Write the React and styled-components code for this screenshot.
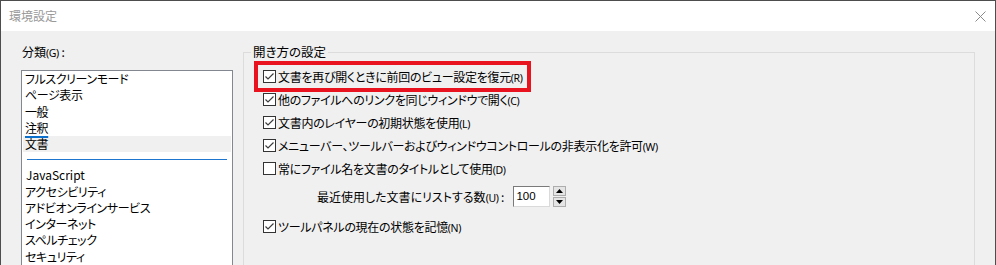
import React from "react";
import styled, { createGlobalStyle } from "styled-components";

const GlobalStyle = createGlobalStyle`
    body {
        margin: 0;
        background: #3a3a3a;
        font-family: "Noto Sans CJK JP", "Noto Sans", sans-serif;
        font-feature-settings: "palt" 1;
        color: #000;
    }
`

const Window = styled.div`
    width: 994px;
    height: 264px;
    border: 1px solid #4d4d4d;
    border-bottom: none;
    background: #f0f0f0;
    overflow: hidden;
    display: flex;
    flex-direction: column;
`

const TitleBar = styled.div`
    height: 30px;
    background: #fff;
    display: flex;
    align-items: center;
    justify-content: space-between;
    padding: 0 9px 0 8px;
    flex-shrink: 0;
`

const Title = styled.span`
    font-size: 12px;
    color: #999;
    line-height: 16px;
`

const CloseButton = styled.button`
    width: 12px;
    height: 12px;
    padding: 0;
    border: none;
    background: none;
    display: flex;
    align-items: center;
    justify-content: center;
`

const Body = styled.div`
    display: flex;
    gap: 10px;
    padding: 13px 20px 0 20px;
`

const LeftColumn = styled.div`
    width: 212px;
    flex-shrink: 0;
    display: flex;
    flex-direction: column;
`

const Label = styled.div`
    font-size: 12px;
    line-height: 16px;
    margin: 0 0 9px 1px;
`

const Key = styled.span`
    font-family: "Noto Sans", sans-serif;
    font-size: 10.5px;
    letter-spacing: -0.4px;
`

const ListBox = styled.div`
    height: 260px;
    border: 1px solid #828790;
    background: #fff;
    padding: 0 1px;
`

const Item = styled.div`
    height: 16.25px;
    line-height: 16.25px;
    font-size: 12px;
    letter-spacing: ${p => p.$latin ? 0 : -0.4}px;
    padding-left: ${p => p.$latin ? 3 : 2}px;
    background: ${p => p.$selected ? '#f0f0f0' : 'transparent'};
    white-space: nowrap;
`

const Hovered = styled.span`
    text-decoration: underline;
    text-decoration-color: #0b6fcc;
    text-decoration-thickness: 2px;
    text-underline-offset: 3px;
`

const Separator = styled.div`
    height: 1px;
    background: #1f76cf;
    margin: 7px 4px 7px 4px;
`

const Group = styled.fieldset`
    flex: 1;
    margin: 0;
    padding: 0;
    border: 1px solid #dcdcdc;
    min-width: 0;
    height: 260px;
`

const Legend = styled.legend`
    margin-left: 7px;
    padding: 0 2px;
    font-size: 12.5px;
    line-height: 16px;
`

const Options = styled.div`
    padding: 5px 0 0 19px;
    display: flex;
    flex-direction: column;
    align-items: flex-start;
`

const Row = styled.label`
    display: flex;
    align-items: center;
    gap: 2px;
    height: 23px;
    font-size: 12px;
    letter-spacing: -0.3px;
    white-space: nowrap;
    ${p => p.$highlight && `
        margin-left: -5px;
        padding: 0 5px 0 5px;
        outline: 4px solid #e8131e;
    `}
`

const SpinRow = styled.div`
    display: flex;
    align-items: center;
    margin: 6px 0 8px 54px;
    font-size: 12px;
    white-space: nowrap;
`

const SpinLabel = styled.span`
    margin-right: 9px;
`

const SpinInput = styled.div`
    width: 33px;
    height: 19px;
    padding-left: 2px;
    background: #fff;
    border: 1px solid;
    border-color: #7a7a7a #dadada #dadada #7a7a7a;
    font-family: "Liberation Sans", sans-serif;
    font-size: 11.5px;
    line-height: 19px;
`

const SpinButtons = styled.div`
    display: flex;
    flex-direction: column;
    gap: 1px;
    margin-left: 3px;
`

const SpinButton = styled.div`
    width: 11px;
    height: 8px;
    border: 1px solid #adadad;
    background: #e5e5e5;
    display: flex;
    align-items: center;
    justify-content: center;
`

const CheckBox = ({ checked }) => (
    <svg width="13" height="13" viewBox="0 0 13 13">
        <rect x="0.5" y="0.5" width="12" height="12" fill="#fff" stroke="#333" />
        {checked && <polyline points="2.5,6.5 5,9 10.5,3.5" fill="none" stroke="#3c3c3c" strokeWidth="1.2" />}
    </svg>
)

const Triangle = ({ up }) => (
    <svg width="7" height="4" viewBox="0 0 7 4">
        <polygon points={up ? "3.5,0 7,4 0,4" : "0,0 7,0 3.5,4"} fill="#000" />
    </svg>
)

const topItems = ['フルスクリーンモード', 'ページ表示', '一般']
const bottomItems = ['アクセシビリティ', 'アドビオンラインサービス', 'インターネット', 'スペルチェック', 'セキュリティ', 'セキュリティ（拡張）', 'タッチ']

const options = [
    { text: '文書を再び開くときに前回のビュー設定を復元', key: 'R', checked: true, highlight: true },
    { text: '他のファイルへのリンクを同じウィンドウで開く', key: 'C', checked: true },
    { text: '文書内のレイヤーの初期状態を使用', key: 'L', checked: true },
    { text: 'メニューバー、ツールバーおよびウィンドウコントロールの非表示化を許可', key: 'W', checked: true },
    { text: '常にファイル名を文書のタイトルとして使用', key: 'D', checked: false },
]

export default function App() {
    return (
        <>
            <GlobalStyle />
            <Window>
                <TitleBar>
                    <Title>環境設定</Title>
                    <CloseButton>
                        <svg width="11" height="11" viewBox="0 0 11 11">
                            <path d="M0.5 0.5 L10.5 10.5 M10.5 0.5 L0.5 10.5" stroke="#8a8a8a" strokeWidth="1" />
                        </svg>
                    </CloseButton>
                </TitleBar>
                <Body>
                    <LeftColumn>
                        <Label>分類<Key>(G)</Key> :</Label>
                        <ListBox>
                            {topItems.map(t => <Item key={t}>{t}</Item>)}
                            <Item><Hovered>注釈</Hovered></Item>
                            <Item $selected>文書</Item>
                            <Separator />
                            <Item $latin>JavaScript</Item>
                            {bottomItems.map(t => <Item key={t}>{t}</Item>)}
                        </ListBox>
                    </LeftColumn>
                    <Group>
                        <Legend>開き方の設定</Legend>
                        <Options>
                            {options.map(o => (
                                <Row key={o.key} $highlight={o.highlight}>
                                    <CheckBox checked={o.checked} />
                                    <span>{o.text}<Key>({o.key})</Key></span>
                                </Row>
                            ))}
                            <SpinRow>
                                <SpinLabel>最近使用した文書にリストする数<Key>(U)</Key> :</SpinLabel>
                                <SpinInput>100</SpinInput>
                                <SpinButtons>
                                    <SpinButton><Triangle up /></SpinButton>
                                    <SpinButton><Triangle /></SpinButton>
                                </SpinButtons>
                            </SpinRow>
                            <Row>
                                <CheckBox checked />
                                <span>ツールパネルの現在の状態を記憶<Key>(N)</Key></span>
                            </Row>
                        </Options>
                    </Group>
                </Body>
            </Window>
        </>
    )
}
